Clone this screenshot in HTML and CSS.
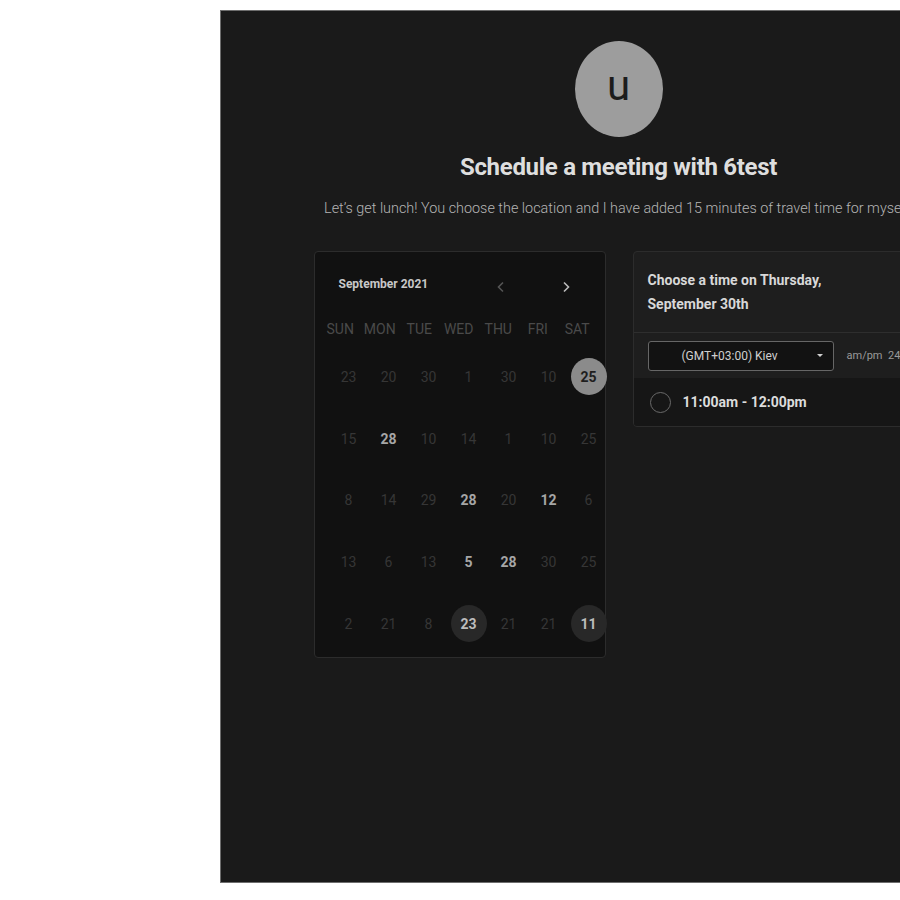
FILE: index.html
```html
<!DOCTYPE html>
<html>
<head>
<meta charset="utf-8">
<link rel="stylesheet" href="styles.css">
</head>
<body>
<div class="page">
  <main class="panel">
    <div class="avatar">u</div>
    <h1 class="title">Schedule a meeting with 6test</h1>
    <p class="subtitle">Let’s get lunch! You choose the location and I have added 15 minutes of travel time for myself.</p>
    <div class="columns">
      <section class="calendar">
        <div class="cal-head">
          <span class="month">September 2021</span>
          <span class="arrows">
            <svg class="arrow prev" width="10" height="12" viewBox="0 0 10 12"><path d="M7 1.5 L2.5 6 L7 10.5" fill="none" stroke="#555" stroke-width="1.6"/></svg>
            <svg class="arrow next" width="10" height="12" viewBox="0 0 10 12"><path d="M3 1.5 L7.5 6 L3 10.5" fill="none" stroke="#bbb" stroke-width="1.6"/></svg>
          </span>
        </div>
        <div class="weekdays">
          <span>SUN</span><span>MON</span><span>TUE</span><span>WED</span><span>THU</span><span>FRI</span><span>SAT</span>
        </div>
        <div class="days">
          <span>23</span><span>20</span><span>30</span><span>1</span><span>30</span><span>10</span><span><b class="sel">25</b></span>
          <span>15</span><span class="on">28</span><span>10</span><span>14</span><span>1</span><span>10</span><span>25</span>
          <span>8</span><span>14</span><span>29</span><span class="on">28</span><span>20</span><span class="on">12</span><span>6</span>
          <span>13</span><span>6</span><span>13</span><span class="on">5</span><span class="on">28</span><span>30</span><span>25</span>
          <span>2</span><span>21</span><span>8</span><span><b class="mark">23</b></span><span>21</span><span>21</span><span><b class="mark">11</b></span>
        </div>
      </section>
      <section class="times">
        <div class="times-head">Choose a time on Thursday, September 30th</div>
        <div class="tz-row">
          <div class="select"><span class="select-text">(GMT+03:00) Kiev</span><span class="caret"></span></div>
          <span class="fmt">am/pm&nbsp;&nbsp;24h</span>
        </div>
        <div class="slot">
          <span class="radio"></span>
          <span class="slot-text">11:00am - 12:00pm</span>
        </div>
      </section>
    </div>
  </main>
</div>
</body>
</html>
```
FILE: styles.css
```css
* { box-sizing: border-box; }
html, body { margin: 0; padding: 0; }
body {
  background: #ffffff;
  overflow: hidden;
  width: 900px;
  height: 900px;
  font-family: Roboto, "Liberation Sans", sans-serif;
}
.page {
  padding: 10px 0 0 220px;
  width: 1100px;
}
.panel {
  width: 796px;
  height: 873px;
  background: #1a1a1a;
  border: 1px solid #6e6e6e;
  border-right: none;
  padding-top: 30px;
  display: flex;
  flex-direction: column;
  align-items: center;
}
.avatar {
  width: 88px;
  height: 96px;
  border-radius: 50%;
  background: #9d9d9d;
  color: #1c1c1c;
  font-size: 42px;
  font-weight: 400;
  display: flex;
  align-items: center;
  justify-content: center;
  padding-bottom: 8px;
}
.title {
  margin: 16px 0 0;
  font-size: 24px;
  line-height: 28px;
  font-weight: 700;
  color: #dedede;
  letter-spacing: -0.3px;
}
.subtitle {
  margin: 19px 0 0;
  font-size: 14.4px;
  line-height: 18px;
  font-weight: 300;
  color: #b5b5b5;
  white-space: nowrap;
}
.columns {
  margin-top: 33px;
  display: flex;
  gap: 27px;
  align-items: flex-start;
}
.calendar {
  width: 292px;
  height: 407px;
  background: #111111;
  border: 1px solid #2c2c2c;
  border-radius: 4px;
}
.cal-head {
  display: flex;
  align-items: center;
  height: 36px;
  margin-top: 14px;
  padding-left: 24px;
}
.month {
  font-size: 12px;
  font-weight: 700;
  color: #c8c8c8;
  width: 157px;
}
.arrows {
  display: flex;
  gap: 55px;
  padding-top: 6px;
}
.weekdays, .days {
  display: grid;
}
.weekdays {
  grid-template-columns: repeat(7, 39.5px);
  padding-left: 6px;
  margin-top: 18px;
}
.weekdays span {
  text-align: center;
  font-size: 14px;
  line-height: 18px;
  color: #4a4a4a;
}
.days {
  grid-template-columns: repeat(7, 40px);
  grid-auto-rows: 61.75px;
  padding-left: 14px;
  margin-top: 8px;
}
.days span {
  display: flex;
  align-items: center;
  justify-content: center;
  font-size: 14px;
  color: #363636;
}
.days span.on {
  color: #a6a6a6;
  font-weight: 700;
}
.days b {
  width: 36px;
  height: 37px;
  border-radius: 50%;
  display: flex;
  align-items: center;
  justify-content: center;
  font-weight: 700;
}
.days b.sel {
  background: #8b8b8b;
  color: #1e1e1e;
}
.days b.mark {
  background: #282828;
  color: #bcbcbc;
}
.times {
  width: 291px;
  background: #1e1e1e;
  border: 1px solid #2c2c2c;
  border-radius: 4px;
  overflow: hidden;
}
.times-head {
  padding: 16px 40px 16px 14px;
  font-size: 14px;
  line-height: 24px;
  font-weight: 700;
  color: #d8d8d8;
  border-bottom: 1px solid #2e2e2e;
}
.tz-row {
  display: flex;
  align-items: center;
  padding: 7px 0 7px 14px;
  height: 45px;
}
.select {
  width: 186px;
  height: 30px;
  background: #121212;
  border: 1px solid #666;
  border-radius: 3px;
  display: flex;
  align-items: center;
  padding-left: 33px;
  position: relative;
}
.select-text {
  font-size: 12px;
  color: #cfcfcf;
}
.caret {
  position: absolute;
  right: 10px;
  top: 12px;
  width: 0;
  height: 0;
  border-left: 3px solid transparent;
  border-right: 3px solid transparent;
  border-top: 3px solid #d0d0d0;
}
.fmt {
  margin-left: 13px;
  font-size: 11px;
  color: #9a9a9a;
  white-space: nowrap;
}
.slot {
  background: #161616;
  height: 48px;
  display: flex;
  align-items: center;
  padding-left: 16px;
}
.radio {
  width: 21px;
  height: 21px;
  border-radius: 50%;
  border: 1.5px solid #6a6a6a;
}
.slot-text {
  margin-left: 12px;
  font-size: 14px;
  font-weight: 700;
  color: #dcdcdc;
}
```
